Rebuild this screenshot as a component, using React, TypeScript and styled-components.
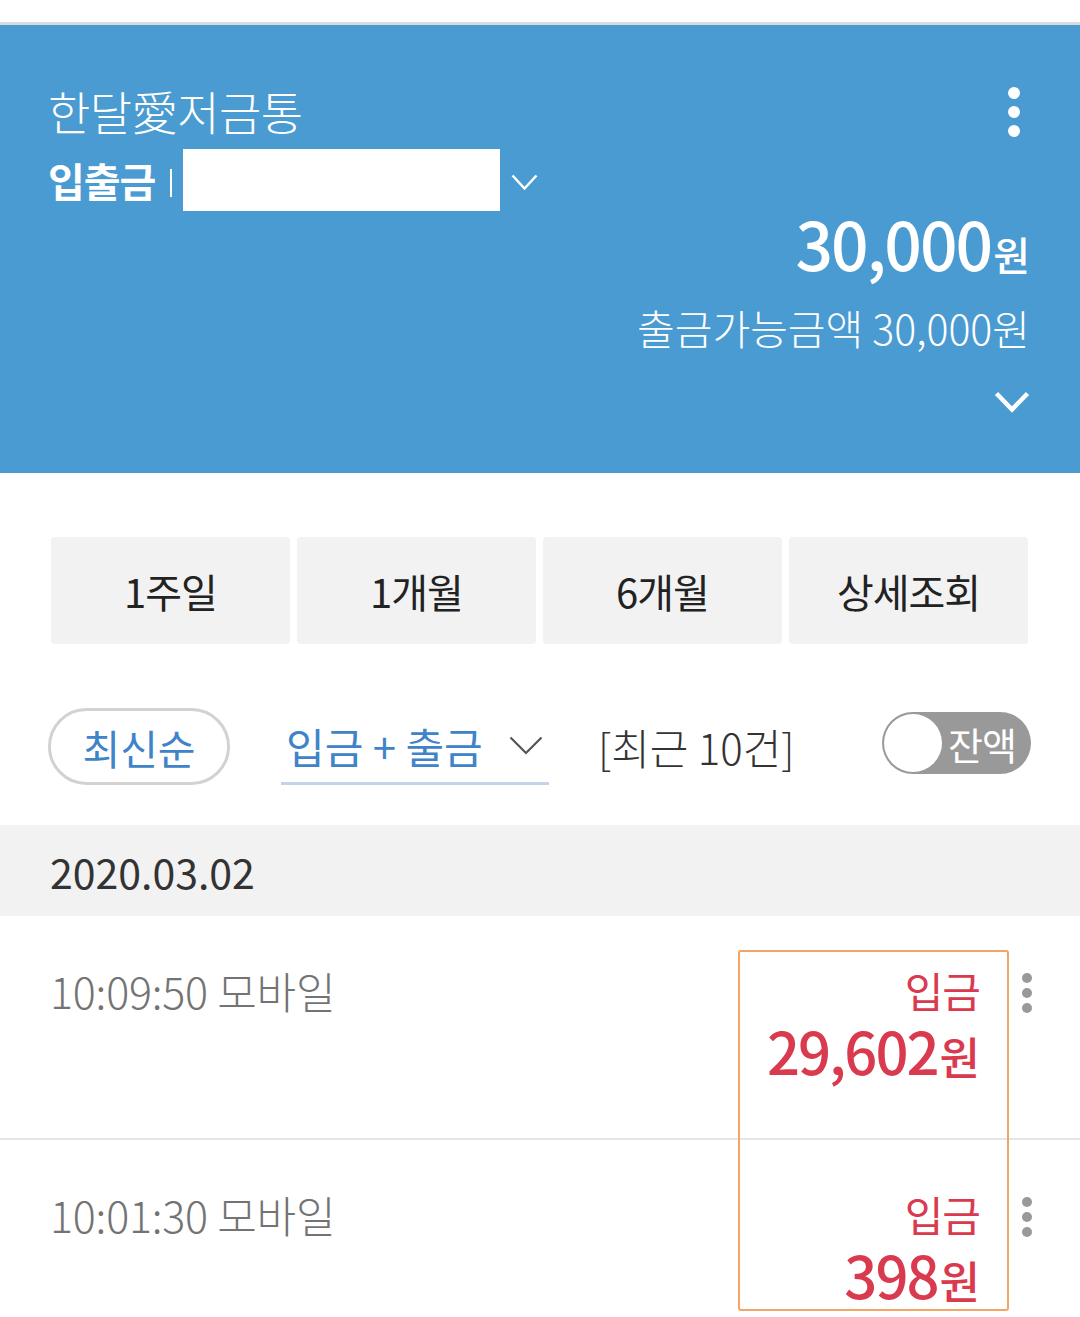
import React from 'react';
import styled, { createGlobalStyle } from 'styled-components';

const GlobalStyle = createGlobalStyle`
  html, body {
    margin: 0;
    padding: 0;
    background: #ffffff;
  }
  body {
    font-family: 'Noto Sans CJK KR', 'Noto Sans', sans-serif;
    color: #333333;
  }
  * {
    box-sizing: border-box;
  }
`;

const Page = styled.div`
  width: 1080px;
  height: 1317px;
  overflow: hidden;
  background: #ffffff;
`;

const TopStrip = styled.div`
  height: 25px;
  border-bottom: 3px solid #d9dbdd;
`;

const Header = styled.header`
  background: #4a9bd1;
  height: 448px;
  padding: 57px 50px 0 48px;
  color: #ffffff;
`;

const HeaderTop = styled.div`
  display: flex;
  justify-content: space-between;
  align-items: flex-start;
`;

const Title = styled.h1`
  margin: 0;
  font-size: 46px;
  line-height: 56px;
  font-weight: 300;
  letter-spacing: -0.5px;
`;

const AccountRow = styled.div`
  display: flex;
  align-items: center;
  height: 62px;
  margin-top: 11px;
`;

const AccountLabel = styled.span`
  font-size: 40px;
  font-weight: 700;
  letter-spacing: -1px;
`;

const Divider = styled.span`
  display: inline-block;
  width: 2px;
  height: 28px;
  background: #ffffff;
  margin: 6px 11px 0 15px;
`;

const MaskedNumber = styled.div`
  width: 317px;
  height: 62px;
  background: #ffffff;
`;

const AccountChevron = styled.svg`
  margin: 4px 0 0 11px;
`;

const MoreButton = styled.svg`
  margin: 5px 10px 0 0;
`;

const Balance = styled.div`
  text-align: right;
  font-size: 66px;
  line-height: 62px;
  font-weight: 500;
  letter-spacing: -2px;
`;

const Won = styled.span<{ $size: number }>`
  font-size: ${({ $size }) => $size}px;
  letter-spacing: 0;
  margin-left: 2px;
`;

const Available = styled.div`
  text-align: right;
  font-size: 41px;
  line-height: 46px;
  font-weight: 300;
  letter-spacing: 0;
  margin-top: 19px;
`;

const ExpandRow = styled.div`
  display: flex;
  justify-content: flex-end;
  margin-top: 41px;
`;

const Tabs = styled.div`
  display: grid;
  grid-template-columns: repeat(4, 1fr);
  gap: 7px;
  margin: 64px 52px 0 51px;
`;

const Tab = styled.button`
  height: 107px;
  border: none;
  border-radius: 4px;
  background: #f2f2f2;
  font-family: inherit;
  font-size: 40px;
  font-weight: 400;
  color: #222222;
  letter-spacing: -1px;
  padding: 0;
`;

const FilterRow = styled.div`
  display: flex;
  align-items: center;
  height: 77px;
  margin-top: 64px;
  padding: 0 49px 0 48px;
`;

const SortPill = styled.button`
  width: 182px;
  height: 77px;
  border: 3px solid #d2d2d2;
  border-radius: 39px;
  background: #ffffff;
  font-family: inherit;
  font-size: 41px;
  color: #3f84c8;
  padding: 0;
  letter-spacing: 0;
`;

const TypeSelect = styled.div`
  display: flex;
  align-items: center;
  justify-content: space-between;
  width: 268px;
  height: 77px;
  margin-left: 51px;
  padding: 0 6px 0 5px;
  border-bottom: 3px solid #c4d4e8;
  font-size: 42px;
  color: #3f84c8;
  letter-spacing: 0;
`;

const Count = styled.div`
  margin-left: 49px;
  font-size: 42px;
  font-weight: 300;
  color: #333333;
  letter-spacing: 0;
`;

const Toggle = styled.div`
  margin-left: auto;
  display: flex;
  align-items: center;
  width: 149px;
  height: 62px;
  border-radius: 31px;
  background: #999999;
  padding: 2px;
  margin-top: -7px;
`;

const Knob = styled.span`
  width: 58px;
  height: 58px;
  border-radius: 50%;
  background: #ffffff;
`;

const ToggleLabel = styled.span`
  margin-left: 6px;
  font-size: 38px;
  color: #ffffff;
  letter-spacing: -1px;
`;

const DateBand = styled.div`
  margin-top: 40px;
  height: 91px;
  background: #f2f2f2;
  display: flex;
  align-items: center;
  padding-left: 50px;
  font-size: 41px;
  color: #333333;
  letter-spacing: 0;
`;

const List = styled.div`
  position: relative;
`;

const Row = styled.div<{ $last?: boolean }>`
  display: flex;
  align-items: flex-start;
  min-height: ${({ $last }) => ($last ? '177px' : '224px')};
  padding: 49px 48px 0 50px;
  border-bottom: ${({ $last }) => ($last ? 'none' : '2px solid #e6e6e6')};
`;

const Time = styled.div`
  font-size: 43px;
  line-height: 50px;
  font-weight: 300;
  color: #737373;
  letter-spacing: -0.2px;
  flex: 1;
`;

const AmountBlock = styled.div`
  text-align: right;
  color: #d93a4e;
`;

const Kind = styled.div`
  font-size: 42px;
  line-height: 50px;
  letter-spacing: -1px;
`;

const Amount = styled.div`
  font-size: 58px;
  line-height: 64px;
  font-weight: 500;
  letter-spacing: -2px;
  margin-top: 3px;
`;

const RowMore = styled.svg`
  margin: 8px 0 0 42px;
`;

const Highlight = styled.div`
  position: absolute;
  top: 34px;
  left: 738px;
  width: 271px;
  height: 361px;
  border: 2.5px solid #f4a566;
  border-radius: 3px;
  pointer-events: none;
`;

const Kebab: React.FC<{ color: string; size: number; gap: number; className?: string }> = ({
  color,
  size,
  gap,
  className,
}) => {
  const r = size / 2;
  const h = size * 3 + gap * 2;
  return (
    <svg className={className} width={size} height={h} viewBox={`0 0 ${size} ${h}`}>
      <circle cx={r} cy={r} r={r} fill={color} />
      <circle cx={r} cy={r + size + gap} r={r} fill={color} />
      <circle cx={r} cy={r + (size + gap) * 2} r={r} fill={color} />
    </svg>
  );
};

const transactions = [
  { time: '10:09:50 모바일', kind: '입금', amount: '29,602' },
  { time: '10:01:30 모바일', kind: '입금', amount: '398' },
];

const App: React.FC = () => {
  return (
    <Page>
      <GlobalStyle />
      <TopStrip />
      <Header>
        <HeaderTop>
          <div>
            <Title>한달愛저금통</Title>
            <AccountRow>
              <AccountLabel>입출금</AccountLabel>
              <Divider />
              <MaskedNumber />
              <AccountChevron width="27" height="17" viewBox="0 0 27 17">
                <polyline points="1.5,1.5 13.5,14.5 25.5,1.5" fill="none" stroke="#ffffff" strokeWidth="2.5" />
              </AccountChevron>
            </AccountRow>
          </div>
          <MoreButton as={Kebab} color="#ffffff" size={12} gap={7} />
        </HeaderTop>
        <Balance>
          30,000<Won $size={40}>원</Won>
        </Balance>
        <Available>출금가능금액 30,000원</Available>
        <ExpandRow>
          <svg width="36" height="22" viewBox="0 0 36 22">
            <polyline points="2.5,2.5 18,18.5 33.5,2.5" fill="none" stroke="#ffffff" strokeWidth="4.5" />
          </svg>
        </ExpandRow>
      </Header>

      <Tabs>
        <Tab>1주일</Tab>
        <Tab>1개월</Tab>
        <Tab>6개월</Tab>
        <Tab>상세조회</Tab>
      </Tabs>

      <FilterRow>
        <SortPill>최신순</SortPill>
        <TypeSelect>
          <span>입금 + 출금</span>
          <svg width="34" height="19" viewBox="0 0 34 19">
            <polyline points="1.5,1.5 17,17 32.5,1.5" fill="none" stroke="#555555" strokeWidth="2.2" />
          </svg>
        </TypeSelect>
        <Count>[최근 10건]</Count>
        <Toggle>
          <Knob />
          <ToggleLabel>잔액</ToggleLabel>
        </Toggle>
      </FilterRow>

      <DateBand>2020.03.02</DateBand>

      <List>
        {transactions.map((t, i) => (
          <Row key={t.time} $last={i === transactions.length - 1}>
            <Time>{t.time}</Time>
            <AmountBlock>
              <Kind>{t.kind}</Kind>
              <Amount>
                {t.amount}
                <Won $size={44}>원</Won>
              </Amount>
            </AmountBlock>
            <RowMore as={Kebab} color="#999999" size={10} gap={5} />
          </Row>
        ))}
        <Highlight />
      </List>
    </Page>
  );
};

export default App;
